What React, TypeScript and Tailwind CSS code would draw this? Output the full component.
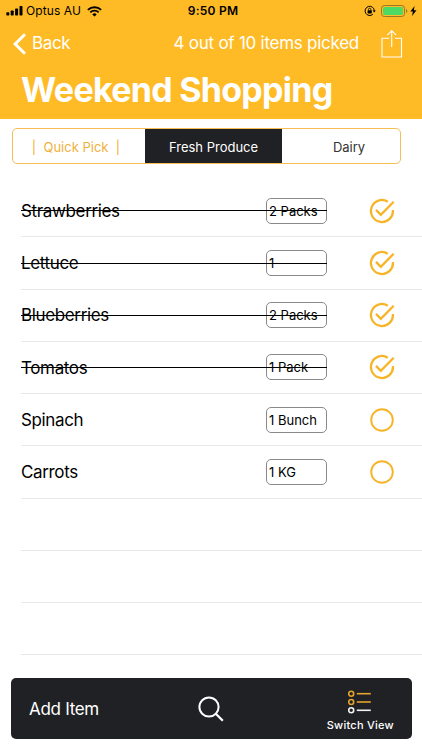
// App.tsx

type Item = {
  name: string
  qty: string
  picked: boolean
}

const items: Item[] = [
  { name: 'Strawberries', qty: '2 Packs', picked: true },
  { name: 'Lettuce', qty: '1', picked: true },
  { name: 'Blueberries', qty: '2 Packs', picked: true },
  { name: 'Tomatos', qty: '1 Pack', picked: true },
  { name: 'Spinach', qty: '1 Bunch', picked: false },
  { name: 'Carrots', qty: '1 KG', picked: false },
]

function StatusBar() {
  return (
    <div className="grid h-[22px] grid-cols-[1fr_auto_1fr] items-center pl-[6px] pr-[5px] text-black">
      <div className="flex items-center">
        <svg width="17" height="10" viewBox="0 0 17 10" fill="currentColor">
          <rect x="0.3" y="6.3" width="3" height="3.2" rx="0.7" />
          <rect x="4.7" y="4.6" width="3" height="4.9" rx="0.7" />
          <rect x="9.1" y="2.6" width="3" height="6.9" rx="0.7" />
          <rect x="13.5" y="0" width="3" height="9.5" rx="0.7" />
        </svg>
        <span className="ml-[3px] text-[12px] leading-[22px] tracking-[0.1px]">Optus AU</span>
        <svg className="ml-[6px]" width="15" height="11" viewBox="0 0 15 11" fill="none" stroke="currentColor">
          <path d="M0.9 3.9a9.4 9.4 0 0 1 13.2 0" strokeWidth="2" />
          <path d="M3.3 6.4a5.9 5.9 0 0 1 8.4 0" strokeWidth="1.8" />
          <path d="M7.5 10.6 5.3 8.4a3.1 3.1 0 0 1 4.4 0z" fill="currentColor" stroke="none" />
        </svg>
      </div>
      <span className="pl-[3px] text-[12px] font-semibold leading-[22px] tracking-[0.25px]">9:50 PM</span>
      <div className="flex items-center justify-end">
        <svg width="12" height="12" viewBox="0 0 12 12" fill="none" stroke="currentColor">
          <path d="M8.9 9.2A4.6 4.6 0 1 1 10.3 5.9" strokeWidth="1" />
          <path d="M8.6 5.5h3.2l-1.6 2.1z" fill="currentColor" stroke="none" />
          <rect x="3.6" y="5.2" width="4.2" height="3.2" rx="0.4" fill="currentColor" stroke="none" />
          <path d="M4.5 5.4V4.4a1.2 1.2 0 0 1 2.4 0v1" strokeWidth="0.8" />
        </svg>
        <svg className="ml-[5px]" width="27" height="12" viewBox="0 0 27 12">
          <rect x="0.5" y="0.5" width="23" height="11" rx="2.8" fill="none" stroke="#9b7623" />
          <rect x="2" y="2" width="20" height="8" rx="1.4" fill="#4cd964" />
          <path d="M25 4v4c.8-.3 1.3-1.1 1.3-2s-.5-1.7-1.3-2z" fill="#9b7623" />
        </svg>
        <svg className="ml-[2px]" width="7" height="10" viewBox="0 0 7 10" fill="currentColor">
          <path d="M4.6 0 .3 5.6h2.6L2 10l4.5-5.8H3.8z" />
        </svg>
      </div>
    </div>
  )
}

function Header() {
  return (
    <header className="h-[119px] bg-[#ffbb25] text-white">
      <StatusBar />
      <div className="flex h-[43px] items-center pl-[13px] pr-[19px] text-[17px]">
        <svg width="14" height="22" viewBox="0 0 14 22" fill="none" stroke="currentColor" strokeWidth="3">
          <path d="M12 1.3 2.2 11 12 20.7" />
        </svg>
        <span className="ml-[5px] tracking-[-0.35px]">Back</span>
        <span className="ml-auto tracking-[-0.26px]">4 out of 10 items picked</span>
        <svg className="ml-[22px]" width="22" height="28" viewBox="0 0 22 28" fill="none" stroke="currentColor" strokeWidth="1.1">
          <path d="M8.2 8.2H1V27h19.5V8.2h-6.7" />
          <path d="M10.7 17V.8M6.3 5.1 10.7.7l4.4 4.4" />
        </svg>
      </div>
      <h1 className="pl-[21px] text-[34px] font-bold leading-[50px] tracking-[-0.72px]">Weekend Shopping</h1>
    </header>
  )
}

function Segments() {
  return (
    <div className="ml-[12px] mt-[9px] flex h-[36px] w-[389px] overflow-hidden rounded-[5px] border border-[#f7be55] text-[13px] leading-[36px]">
      <div className="w-[132px] whitespace-pre pr-[6px] text-center text-[#f0b13c]">{'|  Quick Pick  |'}</div>
      <div className="w-[137px] bg-[#202125] text-center text-white">Fresh Produce</div>
      <div className="flex-1 pl-4 text-center text-[#333]">Dairy</div>
    </div>
  )
}

function Check({ picked }: { picked: boolean }) {
  return (
    <svg width="26" height="26" viewBox="0 0 26 26" fill="none" stroke="#f8b429">
      {picked ? (
        <>
          <path d="M18.8 3.7A11 11 0 1 0 23.9 12" strokeWidth="2.3" />
          <path d="M7 11.9l4.8 4.9L24.7 3.7" strokeWidth="2.3" />
        </>
      ) : (
        <circle cx="13" cy="13" r="10.8" strokeWidth="1.9" />
      )}
    </svg>
  )
}

function Row({ item }: { item?: Item }) {
  return (
    <li className="ml-[21px] flex h-[52.25px] items-center border-b border-[#e8e8e8]">
      {item && (
        <>
          <div className="relative flex w-[306px] items-center justify-between">
            <span className="pt-[2px] text-[17px] tracking-[-0.36px]">{item.name}</span>
            <span className="h-[26px] w-[61px] rounded-[5px] border border-[#8a8a8a] pl-[2px] text-[13px] leading-[24px]">
              {item.qty}
            </span>
            {item.picked && <span className="absolute inset-x-0 top-[13.4px] h-px bg-black" />}
          </div>
          <div className="ml-[42px]">
            <Check picked={item.picked} />
          </div>
        </>
      )}
    </li>
  )
}

function Toolbar() {
  return (
    <nav className="mx-[10.5px] mt-auto mb-[11px] grid h-[61px] grid-cols-3 items-center rounded-[5px] bg-[#202125] text-white">
      <span className="pl-[18.5px] pt-[2px] text-[17px] tracking-[-0.3px]">Add Item</span>
      <svg className="justify-self-center" width="26" height="26" viewBox="0 0 26 26" fill="none" stroke="currentColor" strokeWidth="2">
        <circle cx="11" cy="11" r="9.6" />
        <path d="M17.8 17.8l7 7" strokeWidth="2.3" />
      </svg>
      <div className="flex flex-col items-center justify-self-end pr-[17.5px] pt-[5px]">
        <svg width="24" height="24" viewBox="0 0 24 24" fill="none" strokeWidth="1.6">
          <g stroke="#e3a42e">
            <circle cx="3.2" cy="3.7" r="2.5" />
            <path d="M8.8 3.7h14" />
            <circle cx="3.2" cy="12" r="2.5" />
            <path d="M8.8 12h14" />
          </g>
          <g stroke="#f2f2f2">
            <circle cx="3.2" cy="20.3" r="2.5" />
            <path d="M8.8 20.3h14" />
          </g>
        </svg>
        <span className="mt-[3px] text-[11px] font-medium leading-[16px] tracking-[0.25px]">Switch View</span>
      </div>
    </nav>
  )
}

export default function App() {
  return (
    <div className="flex h-[750px] w-[422px] flex-col overflow-hidden bg-white font-['Inter',sans-serif] text-black">
      <Header />
      <Segments />
      <ul className="mt-[21px]">
        {items.map((item) => (
          <Row key={item.name} item={item} />
        ))}
        <Row />
        <Row />
        <Row />
      </ul>
      <Toolbar />
    </div>
  )
}
